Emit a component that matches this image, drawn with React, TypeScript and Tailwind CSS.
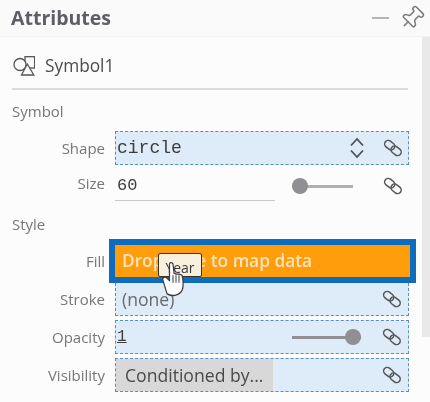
import React from 'react';
import { Pin } from 'lucide-react';

function LinkIcon() {
  return (
    <svg width="20" height="18" viewBox="0 0 20 18" fill="none" stroke="#555" strokeWidth="1.5" className="shrink-0 -mr-[1px]">
      <rect x="1.2" y="2.6" width="11" height="7.2" rx="3.6" transform="rotate(38 6.7 6.2)" />
      <rect x="7.6" y="8.2" width="11" height="7.2" rx="3.6" transform="rotate(38 13.1 11.8)" />
    </svg>
  );
}

function SymbolIcon() {
  return (
    <svg width="22" height="20" viewBox="0 0 22 20" fill="none" stroke="#555" strokeWidth="1.3" className="ml-[1px] shrink-0">
      <rect x="12" y="0.7" width="9.6" height="11.3" fill="#fcfcfc" />
      <circle cx="7" cy="8.5" r="6" fill="#fcfcfc" />
      <path d="M14.3 8 L20.8 19 H8.5 Z" fill="#fcfcfc" />
    </svg>
  );
}

function UpDown() {
  return (
    <svg width="16" height="22" viewBox="0 0 16 22" fill="none" stroke="#4f4f4f" strokeWidth="1.8">
      <path d="M2 8.5 L8 2 L14 8.5" />
      <path d="M2 13.5 L8 20 L14 13.5" />
    </svg>
  );
}

function Row({ label, className, children }: { label: string; className: string; children: React.ReactNode }) {
  return (
    <div className="flex items-stretch">
      <div className="w-[105px] shrink-0 flex items-center justify-end text-[15px] text-[#77777a]">{label}</div>
      <div className={`ml-[10px] w-[294px] flex items-center ${className}`}>{children}</div>
    </div>
  );
}

const drop = 'border-[1.5px] border-dashed border-[#5b8fc4] bg-[#deebf9]';

export default function App() {
  return (
    <div className="w-[430px] h-[402px] overflow-hidden bg-[#fcfcfc] blur-[0.4px]" style={{ fontFamily: '"Open Sans", "Noto Sans", sans-serif' }}>
      <div className="h-[37px] flex items-center justify-between bg-[#fafafa] border-b border-[#f1f1f1] pl-[11px] pr-[5px]">
        <h1 className="text-[19.5px] font-bold text-[#5e5f66] leading-none">Attributes</h1>
        <div className="flex items-center gap-[10px]">
          <div className="w-[17px] h-[2px] bg-[#b5b5b5]" />
          <Pin size={26} strokeWidth={1.4} className="text-[#7b7b7b] rotate-45" />
        </div>
      </div>

      <div className="flex">
        <div className="w-[422px] shrink-0">
          <div className="h-[53px] mx-[12px] w-[396px] pt-[7px] flex items-center border-b-2 border-[#dcdcdc]">
            <SymbolIcon />
            <span className="ml-[10px] text-[17.3px] text-[#4c4c4c]">Symbol1</span>
          </div>

          <div className="ml-[12px] mt-[11px] text-[15px] leading-[20px] text-[#77777a]">Symbol</div>

          <div className="mt-[10px]">
            <Row label="Shape" className={`h-[34px] ${drop} pr-[6px]`}>
              <span className="ml-[1px] text-[18px] text-[#3d3d3d]" style={{ fontFamily: '"Liberation Mono", monospace' }}>circle</span>
              <span className="ml-auto mr-[18px] flex"><UpDown /></span>
              <LinkIcon />
            </Row>
            <Row label="Size" className="h-[36px] pr-[7px]">
              <div className="w-[160px] h-full pt-[6px] flex items-center border-b border-[#c9c9c9]">
                <span className="ml-[2px] text-[17px] text-[#3d3d3d]" style={{ fontFamily: '"Liberation Mono", monospace' }}>60</span>
              </div>
              <div className="ml-[17px] mt-[6px] w-[61px] h-[3px] bg-[#b0b0b0] relative flex items-center">
                <div className="w-[16px] h-[16px] rounded-full bg-[#8f8f94] absolute left-0" />
              </div>
              <span className="ml-auto mt-[6px] flex"><LinkIcon /></span>
            </Row>
          </div>

          <div className="ml-[12px] mt-[13px] text-[15px] leading-[20px] text-[#77777a]">Style</div>

          <div className="mt-[5px] flex items-stretch">
            <div className="w-[105px] shrink-0 flex items-center justify-end text-[15px] text-[#77777a]">Fill</div>
            <div className="ml-[4px] w-[307px] h-[44px] border-[6px] border-[#0f6cbd] relative">
              <div className="h-full bg-[#ff9d0d] flex items-center pl-[7px] text-[17.3px] font-semibold text-[#fbe3bd]">
                Drop here to map data
              </div>
              <div className="absolute left-[43px] top-[8px] w-[44px] h-[24px] bg-[#f8efde] border border-[#3a3020] rounded-[2px] text-[14px] leading-[27px] text-center text-[#3a3a3a]">
                Year
              </div>
              <svg className="absolute left-[45px] top-[16px]" width="26" height="37" viewBox="0 0 26 34" fill="none" preserveAspectRatio="none">
                <path d="M7 30 C11 33 19 32 22 27 C24 23 23 17 22 13 L19 12 L16 12 L14 11 L13 3 C12.5 1 9.5 1 9.5 3 L9.5 18 L6 15 C4 14 2 16 3 18 Z" fill="#fff" stroke="#3a3a3a" strokeWidth="1.2" />
                <path d="M13 13 V20 M16 13 V20 M19 13 V20" stroke="#3a3a3a" strokeWidth="1" />
              </svg>
            </div>
          </div>

          <Row label="Stroke" className={`h-[33px] ${drop} border-t-0 pr-[7px]`}>
            <span className="ml-[6px] text-[17.6px] text-[#6a6a6a]">(none)</span>
            <span className="ml-auto flex"><LinkIcon /></span>
          </Row>
          <div className="mt-[4px]">
            <Row label="Opacity" className={`h-[34px] ${drop} pr-[7px]`}>
              <span className="ml-[1px] text-[16px] text-[#3d3d3d] underline" style={{ fontFamily: '"Liberation Mono", monospace' }}>1</span>
              <div className="ml-auto w-[69px] h-[3px] bg-[#8f8f94] relative flex items-center">
                <div className="w-[16px] h-[16px] rounded-full bg-[#8f8f94] absolute right-0" />
              </div>
              <span className="ml-[21px] flex"><LinkIcon /></span>
            </Row>
          </div>
          <div className="mt-[4px]">
            <Row label="Visibility" className={`h-[34px] ${drop} pr-[7px]`}>
              <div className="w-[157px] h-full bg-[#d8d8d8] flex items-center pl-[9px] text-[17.6px] text-[#4a4a4a]">Conditioned by...</div>
              <span className="ml-auto flex"><LinkIcon /></span>
            </Row>
          </div>
        </div>

        <div className="w-[8px] h-[300px] bg-[#e9e9e9]" />
      </div>
    </div>
  );
}
